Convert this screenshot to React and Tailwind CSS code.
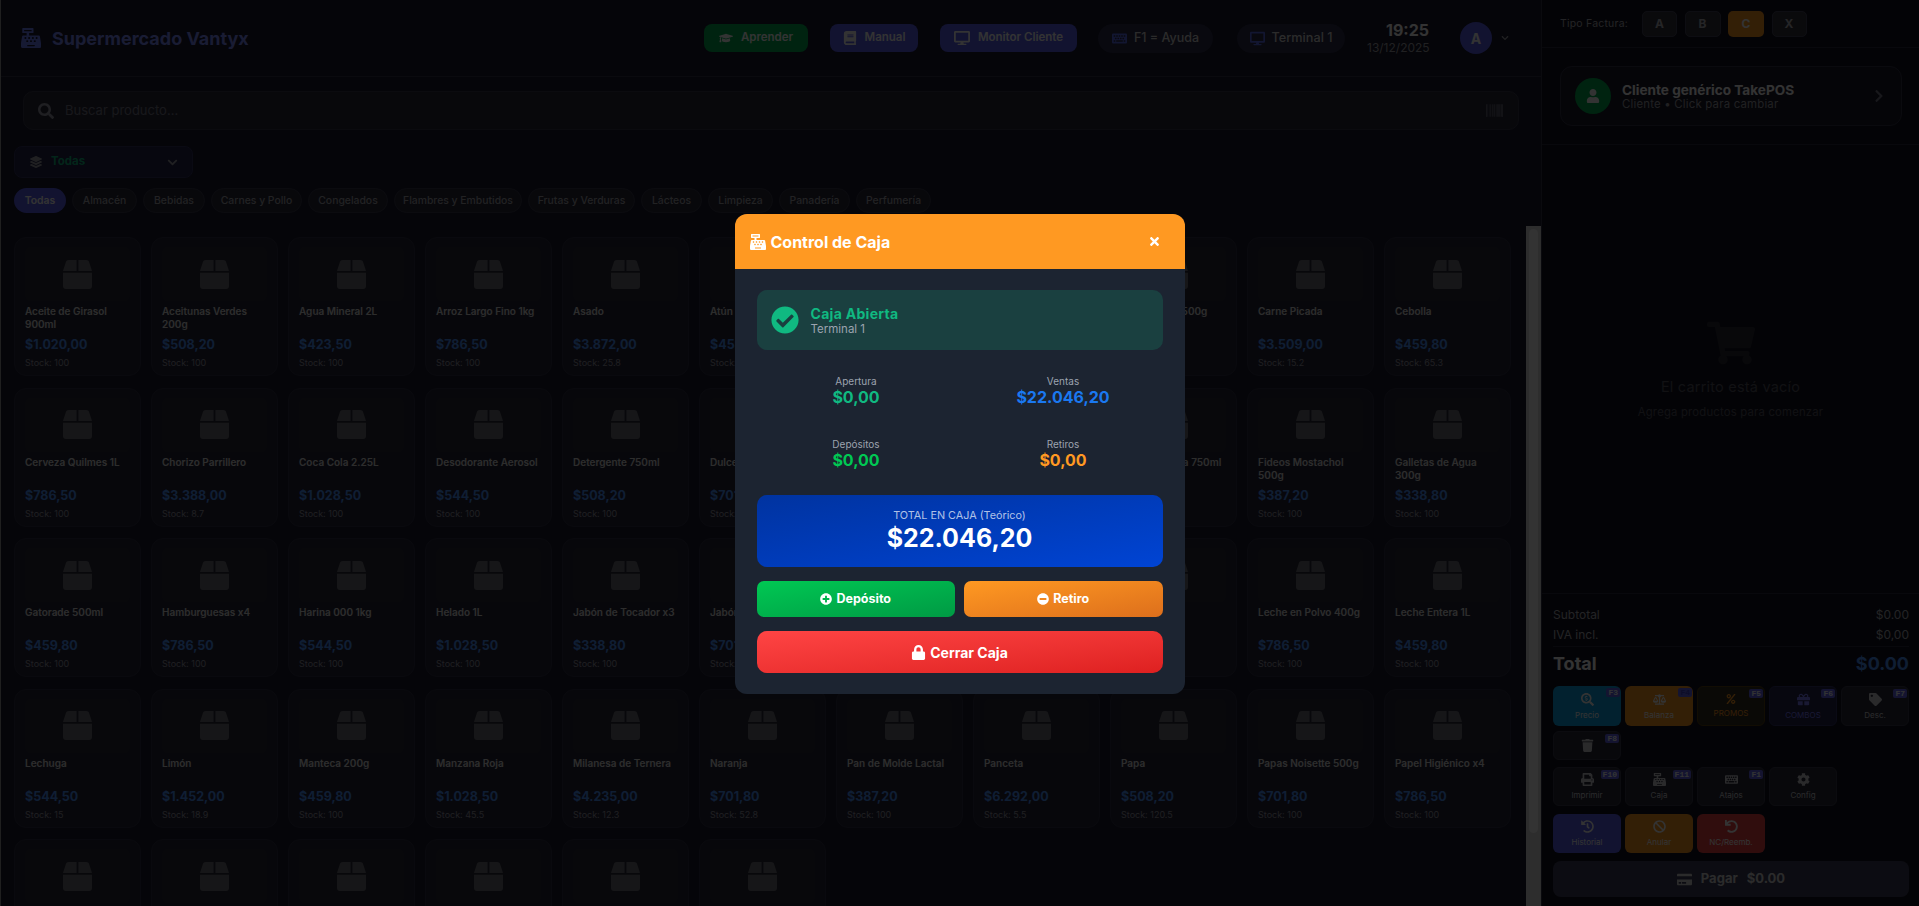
import {
  FaBalanceScale, FaBan, FaBarcode, FaBook, FaBox, FaCashRegister, FaCheckCircle, FaChevronDown, FaChevronRight,
  FaCog, FaCreditCard, FaDesktop, FaGift, FaGraduationCap, FaHistory, FaKeyboard, FaLayerGroup, FaLock,
  FaMinusCircle, FaPercent, FaPlusCircle, FaPrint, FaSearch, FaSearchDollar, FaShoppingCart, FaTag, FaTimes,
  FaTrash, FaUndo, FaUser,
} from 'react-icons/fa';

const categories = [
  ['Almacén', 'w-[65px]'], ['Bebidas', 'w-[62px]'], ['Carnes y Pollo', 'w-[91px]'], ['Congelados', 'w-[80px]'],
  ['Flambres y Embutidos', 'w-[128px]'], ['Frutas y Verduras', 'w-[107px]'], ['Lácteos', 'w-[61px]'],
  ['Limpieza', 'w-[65px]'], ['Panadería', 'w-[71px]'], ['Perfumería', 'w-[75px]'],
];

const products = [
  ['Aceite de Girasol 900ml', '$1.020,00', '100'], ['Aceitunas Verdes 200g', '$508,20', '100'], ['Agua Mineral 2L', '$423,50', '100'],
  ['Arroz Largo Fino 1kg', '$786,50', '100'], ['Asado', '$3.872,00', '25.8'], ['Atún en Lata', '$459,80', '100'],
  ['Azúcar 1kg', '$459,80', '100'], ['Banana', '$701,80', '60'], ['Café Molido 500g', '$786,50', '100'],
  ['Carne Picada', '$3.509,00', '15.2'], ['Cebolla', '$459,80', '65.3'],
  ['Cerveza Quilmes 1L', '$786,50', '100'], ['Chorizo Parrillero', '$3.388,00', '8.7'], ['Coca Cola 2.25L', '$1.028,50', '100'],
  ['Desodorante Aerosol', '$544,50', '100'], ['Detergente 750ml', '$508,20', '100'], ['Dulce de Leche', '$701,80', '100'],
  ['Empanadas x12', '$786,50', '100'], ['Fanta 2.25L', '$786,50', '100'], ['Fernet Branca 750ml', '$459,80', '100'],
  ['Fideos Mostachol 500g', '$387,20', '100'], ['Galletas de Agua 300g', '$338,80', '100'],
  ['Gatorade 500ml', '$459,80', '100'], ['Hamburguesas x4', '$786,50', '100'], ['Harina 000 1kg', '$544,50', '100'],
  ['Helado 1L', '$1.028,50', '100'], ['Jabón de Tocador x3', '$338,80', '100'], ['Jabón Líquido', '$701,80', '100'],
  ['Jamón Cocido', '$701,80', '100'], ['Lavandina', '$338,80', '100'], ['Leche 1L', '$459,80', '100'],
  ['Leche en Polvo 400g', '$786,50', '100'], ['Leche Entera 1L', '$459,80', '100'],
  ['Lechuga', '$544,50', '15'], ['Limón', '$1.452,00', '18.9'], ['Manteca 200g', '$459,80', '100'],
  ['Manzana Roja', '$1.028,50', '45.5'], ['Milanesa de Ternera', '$4.235,00', '12.3'], ['Naranja', '$701,80', '52.8'],
  ['Pan de Molde Lactal', '$387,20', '100'], ['Panceta', '$6.292,00', '5.5'], ['Papa', '$508,20', '120.5'],
  ['Papas Noisette 500g', '$701,80', '100'], ['Papel Higiénico x4', '$786,50', '100'],
  ['Pechuga de Pollo', '$786,50', '100'], ['Pepsi 2.25L', '$786,50', '100'], ['Pollo Entero', '$786,50', '100'],
  ['Queso Cremoso', '$786,50', '100'], ['Salchichas x6', '$786,50', '100'], ['Shampoo 400ml', '$786,50', '100'],
];

function HeaderButton({ icon: Icon, label, className, size = 14 }) {
  return (
    <div className={`h-[28px] flex items-center justify-center gap-[8px] rounded-[8px] text-[11.5px] font-semibold text-white ${className}`}>
      <Icon size={size} />
      {label}
    </div>
  );
}

function ProductCard({ name, price, stock }) {
  return (
    <div className="h-[139px] rounded-[12px] border border-[#2f3045] bg-[#26263a] px-[10px] pt-[9px]">
      <div className="h-[54px] rounded-[6px] bg-[#2c2c3a] flex items-center justify-center">
        <FaBox size={29} className="text-[#6f6f78]" />
      </div>
      <div className="mt-[4px] h-[26px] text-[10px] leading-[13px] font-semibold text-[#e0e0e0]">{name}</div>
      <div className="mt-[4px] h-[20px] text-[12.5px] leading-[20px] font-bold text-[#4d94ff]">{price}</div>
      <div className="mt-[1px] text-[9px] leading-[14px] text-[#9a9aa8]">Stock: {stock}</div>
    </div>
  );
}

function ActionButton({ icon: Icon, label, badge, className, badgeClass = 'text-white', h = 'h-[40px]', iconSize = 13 }) {
  return (
    <div className={`relative ${h} rounded-[6px] flex flex-col items-center justify-center gap-[4px] text-[8px] leading-[10px] ${className}`}>
      {badge && (
        <span className={`absolute top-[2px] right-[1px] h-[9px] px-[2px] flex items-center justify-center rounded-[2px] bg-[#6366f1] font-['Liberation_Mono',monospace] font-bold text-[8px] ${badgeClass}`}>
          {badge}
        </span>
      )}
      <Icon size={iconSize} />
      {label && <span>{label}</span>}
    </div>
  );
}

function Stat({ label, value, color }) {
  return (
    <div className="text-center">
      <div className="text-[10px] leading-[14px] text-[#9ca3af]">{label}</div>
      <div className={`h-[20px] text-[16px] leading-[18px] font-bold ${color}`}>{value}</div>
    </div>
  );
}

function CajaModal() {
  return (
    <div className="fixed inset-0 bg-black/80 flex items-center justify-center">
      <div className="mt-[2px] w-[450px] rounded-[12px] overflow-hidden bg-[#1c2431]">
        <div className="h-[55px] bg-[#ff9922] flex items-center justify-between pl-[15px] pr-[24px] text-white">
          <div className="flex items-center gap-[5px] text-[16px] font-bold">
            <FaCashRegister size={16} />
            Control de Caja
          </div>
          <FaTimes size={13} />
        </div>
        <div className="px-[22px] pt-[21px] pb-[21px]">
          <div className="h-[60px] rounded-[10px] bg-[#1a4040] flex items-center gap-[12px] px-[14px]">
            <FaCheckCircle size={28} className="text-[#10b981]" />
            <div>
              <div className="text-[14px] leading-[17px] font-bold tracking-[0.3px] text-[#10b981]">Caja Abierta</div>
              <div className="text-[11.5px] leading-[14px] text-[#9ca3af]">Terminal 1</div>
            </div>
          </div>
          <div className="mt-[24px] mb-[24px] grid grid-cols-2 gap-x-[8px] gap-y-[29px]">
            <Stat label="Apertura" value="$0,00" color="text-[#10b981]" />
            <Stat label="Ventas" value="$22.046,20" color="text-[#1a78f0]" />
            <Stat label="Depósitos" value="$0,00" color="text-[#00c853]" />
            <Stat label="Retiros" value="$0,00" color="text-[#ff9922]" />
          </div>
          <div className="h-[72px] rounded-[10px] bg-gradient-to-br from-[#0033a0] to-[#0044d4] flex flex-col items-center justify-center text-white">
            <div className="text-[10.8px] leading-[14px] text-white/70">TOTAL EN CAJA (Teórico)</div>
            <div className="text-[25px] leading-[30px] font-bold">$22.046,20</div>
          </div>
          <div className="mt-[14px] grid grid-cols-2 gap-[9px]">
            <div className="h-[36px] rounded-[7px] bg-gradient-to-br from-[#00c853] to-[#009a44] flex items-center justify-center gap-[4px] text-[12.5px] font-bold text-white">
              <FaPlusCircle size={12} /> Depósito
            </div>
            <div className="h-[36px] rounded-[7px] bg-gradient-to-br from-[#ff9922] to-[#dd6f1c] flex items-center justify-center gap-[4px] text-[12.5px] font-bold text-white">
              <FaMinusCircle size={12} /> Retiro
            </div>
          </div>
          <div className="mt-[14px] h-[42px] rounded-[10px] bg-gradient-to-br from-[#ff4444] to-[#de2020] flex items-center justify-center gap-[4px] text-[14px] font-bold text-white">
            <FaLock size={15} /> Cerrar Caja
          </div>
        </div>
      </div>
    </div>
  );
}

export default function App() {
  return (
    <div className="h-screen overflow-hidden flex bg-[#1a1a2e] border-l border-[#999] font-['Inter',sans-serif]">
      <main className="flex-1 min-w-0 flex flex-col border-r border-[#333348]">
        <header className="h-[77px] shrink-0 flex items-center justify-between pl-[20px] pr-[32px] border-b border-[#333348]">
          <div className="flex items-center gap-[11px] text-[18px] font-bold text-[#7f8cff]">
            <FaCashRegister size={20} className="text-[#6d80ff]" />
            Supermercado Vantyx
          </div>
          <div className="flex items-center">
            <HeaderButton icon={FaGraduationCap} label="Aprender" className="w-[104px] bg-[#00b050]" />
            <HeaderButton icon={FaBook} label="Manual" className="w-[88px] ml-[22px] bg-[#5b5fef]" />
            <HeaderButton icon={FaDesktop} label="Monitor Cliente" className="w-[137px] ml-[22px] bg-[#5b5fef]" size={16} />
            <div className="w-[115px] h-[29px] ml-[21px] rounded-[15px] bg-[#2e2e4a] flex items-center justify-center gap-[7px] text-[12.5px] font-medium text-[#d8d8d8]">
              <FaKeyboard size={15} className="text-[#5b6ef5]" /> F1 = Ayuda
            </div>
            <div className="w-[108px] h-[29px] ml-[24px] rounded-[15px] bg-[#2e2e4a] flex items-center justify-center gap-[7px] text-[12.7px] font-medium text-[#d8d8d8]">
              <FaDesktop size={15} className="text-[#5b6ef5]" /> Terminal 1
            </div>
            <div className="ml-[22px] w-[62px] text-right">
              <div className="text-[16px] leading-[19px] font-bold text-white">19:25</div>
              <div className="mt-[1px] text-[12px] leading-[14px] text-[#a0a0a8]">13/12/2025</div>
            </div>
            <div className="ml-[31px] w-[32px] h-[32px] rounded-full bg-[#5b5fef] flex items-center justify-center text-[14px] font-bold text-white">A</div>
            <FaChevronDown size={8} className="ml-[9px] text-[#a0a0a8]" />
          </div>
        </header>

        <div className="mt-[14px] mx-[22px] h-[39px] shrink-0 rounded-[10px] border border-[#3a3a4c] bg-[#2b2b3b] flex items-center pl-[14px] pr-[15px]">
          <FaSearch size={16} className="text-[#9a9aa8]" />
          <span className="ml-[11px] flex-1 text-[13px] text-[#777788]">Buscar producto...</span>
          <FaBarcode size={17} className="text-[#777788]" />
        </div>

        <div className="mt-[16px] ml-[13px] w-[179px] h-[32px] shrink-0 rounded-[8px] border border-[#333360] bg-[#23234a] flex items-center pl-[15px] pr-[14px] text-[11.5px] font-bold text-[#10b981]">
          <FaLayerGroup size={12} className="text-[#a0a0a8]" />
          <span className="ml-[9px] flex-1">Todas</span>
          <FaChevronDown size={11} className="text-[#a0a0a8]" />
        </div>

        <div className="mt-[10px] ml-[13px] h-[25px] shrink-0 flex gap-[6px]">
          <div className="w-[52px] rounded-[13px] bg-[#5b5fef] flex items-center justify-center text-[10.4px] font-semibold text-white">Todas</div>
          {categories.map(([name, width]) => (
            <div key={name} className={`${width} rounded-[13px] border border-[#3a3a4c] bg-[#2b2b3b] flex items-center justify-center text-[10.4px] font-medium text-[#a8a8b0]`}>
              {name}
            </div>
          ))}
        </div>

        <div className="mt-[13px] flex-1 min-h-0 flex">
          <div className="flex-1 min-w-0 overflow-hidden pl-[13px] pt-[11px]">
            <div className="grid grid-cols-[repeat(11,127px)] gap-x-[10px] gap-y-[11.5px]">
              {products.map(([name, price, stock]) => (
                <ProductCard key={name} name={name} price={price} stock={stock} />
              ))}
            </div>
          </div>
          <div className="w-[15px] shrink-0 bg-[#e0e0e0] px-[3px] pt-[3px]">
            <div className="h-[604px] rounded-[5px] bg-white" />
          </div>
        </div>
      </main>

      <aside className="w-[377px] shrink-0 flex flex-col bg-[#12121f]">
        <div className="h-[48px] shrink-0 border-b border-[#2a2a3c] flex items-center pl-[18px] text-[10.5px] text-[#b0b0b8]">
          <span className="w-[67px] whitespace-nowrap tracking-[0.2px]">Tipo Factura:</span>
          <div className="ml-[15px] flex gap-[7.5px] text-[12px] font-bold">
            <span className="w-[35px] h-[26px] rounded-[5px] border border-[#44445a] bg-[#34343f] flex items-center justify-center text-[#b8b8c0]">A</span>
            <span className="w-[36px] h-[26px] rounded-[5px] border border-[#44445a] bg-[#34343f] flex items-center justify-center text-[#b8b8c0]">B</span>
            <span className="w-[36px] h-[26px] rounded-[5px] bg-[#ff9922] flex items-center justify-center text-white">C</span>
            <span className="w-[35px] h-[26px] rounded-[5px] border border-[#44445a] bg-[#34343f] flex items-center justify-center text-[#b8b8c0]">X</span>
          </div>
        </div>

        <div className="h-[97px] shrink-0 border-b border-[#2a2a3c] pt-[18px] px-[18px]">
          <div className="h-[60px] w-[342px] rounded-[12px] border border-[#333348] bg-[#1a1a2a] flex items-center pl-[14px] pr-[15px]">
            <div className="w-[36px] h-[36px] rounded-full bg-[#00b050] flex items-center justify-center">
              <FaUser size={14} className="text-white" />
            </div>
            <div className="ml-[11px] flex-1 pt-[1px]">
              <div className="text-[13.6px] leading-[16px] font-bold text-white">Cliente genérico TakePOS</div>
              <div className="text-[11.4px] leading-[13px] tracking-[0.2px] text-[#a0a0a8]">Cliente • Click para cambiar</div>
            </div>
            <FaChevronRight size={14} className="text-[#777788]" />
          </div>
        </div>

        <div className="flex-1 min-h-0 flex flex-col items-center justify-center">
          <FaShoppingCart size={48} className="text-[#2a2a36]" />
          <div className="mt-[10px] text-[14.5px] leading-[20px] tracking-[0.2px] text-[#555562]">El carrito está vacío</div>
          <div className="mt-[7px] text-[11.3px] leading-[16px] tracking-[0.2px] text-[#555562]">Agrega productos para comenzar</div>
        </div>

        <div className="shrink-0 border-t border-[#2a2a3c] pl-[11px] pr-[10px] pt-[11px] pb-[9px]">
          <div className="h-[20px] flex items-center justify-between text-[12px] text-[#b0b0b8]"><span>Subtotal</span><span>$0.00</span></div>
          <div className="h-[20px] flex items-center justify-between text-[12px] text-[#b0b0b8]"><span>IVA incl.</span><span>$0,00</span></div>
          <div className="mt-[1px] border-t border-[#2a2a3c] h-[33px] flex items-center justify-between text-[18px] font-bold">
            <span className="text-white">Total</span>
            <span className="text-[#4d94ff]">$0.00</span>
          </div>

          <div className="mt-[7px] grid grid-cols-5 gap-[4px]">
            <ActionButton icon={FaSearchDollar} label="Precio" badge="F3" className="bg-[#0ea5e9] text-white" />
            <ActionButton icon={FaBalanceScale} label="Balanza" badge="F4" badgeClass="text-[#4043c8]" className="bg-[#ff9922] text-white" />
            <ActionButton icon={FaPercent} iconSize={10} label="PROMOS" badge="F5" className="border border-[#5a4010] bg-[#33301f] text-[#ff9922]" />
            <ActionButton icon={FaGift} label="COMBOS" badge="F6" className="border border-[#333368] bg-[#23234a] text-[#7c7cff]" />
            <ActionButton icon={FaTag} label="Desc." badge="F7" className="border border-[#3a3a4c] bg-[#2b2b3b] text-[#d0d0d8]" />
          </div>
          <div className="mt-[5px] grid grid-cols-5 gap-[4px]">
            <ActionButton icon={FaTrash} badge="F8" h="h-[29px]" className="border border-[#3a3a4c] bg-[#2b2b3b] text-[#d0d0d8]" />
          </div>
          <div className="mt-[7px] grid grid-cols-5 gap-[4px]">
            <ActionButton icon={FaPrint} label="Imprimir" badge="F10" h="h-[39px]" className="border border-[#3a3a4c] bg-[#2b2b3b] text-[#d0d0d8]" />
            <ActionButton icon={FaCashRegister} label="Caja" badge="F11" h="h-[39px]" className="border border-[#3a3a4c] bg-[#2b2b3b] text-[#d0d0d8]" />
            <ActionButton icon={FaKeyboard} label="Atajos" badge="F1" h="h-[39px]" className="border border-[#3a3a4c] bg-[#2b2b3b] text-[#d0d0d8]" />
            <ActionButton icon={FaCog} label="Config" h="h-[39px]" className="border border-[#3a3a4c] bg-[#2b2b3b] text-[#d0d0d8]" />
          </div>
          <div className="mt-[8px] grid grid-cols-5 gap-[4px]">
            <ActionButton icon={FaHistory} label="Historial" h="h-[39px]" className="bg-[#5b5fef] text-white" />
            <ActionButton icon={FaBan} label="Anular" h="h-[39px]" className="bg-[#ff9922] text-white" />
            <ActionButton icon={FaUndo} label="NC/Reemb." h="h-[39px]" className="bg-[#ef4444] text-white" />
          </div>
          <div className="mt-[8px] h-[36px] rounded-[8px] bg-[#3f3f5a] flex items-center justify-center gap-[9px] text-[13px] font-bold text-[#d8d8d8]">
            <FaCreditCard size={15} />
            <span>Pagar</span>
            <span>$0.00</span>
          </div>
        </div>
      </aside>

      <CajaModal />
    </div>
  );
}
